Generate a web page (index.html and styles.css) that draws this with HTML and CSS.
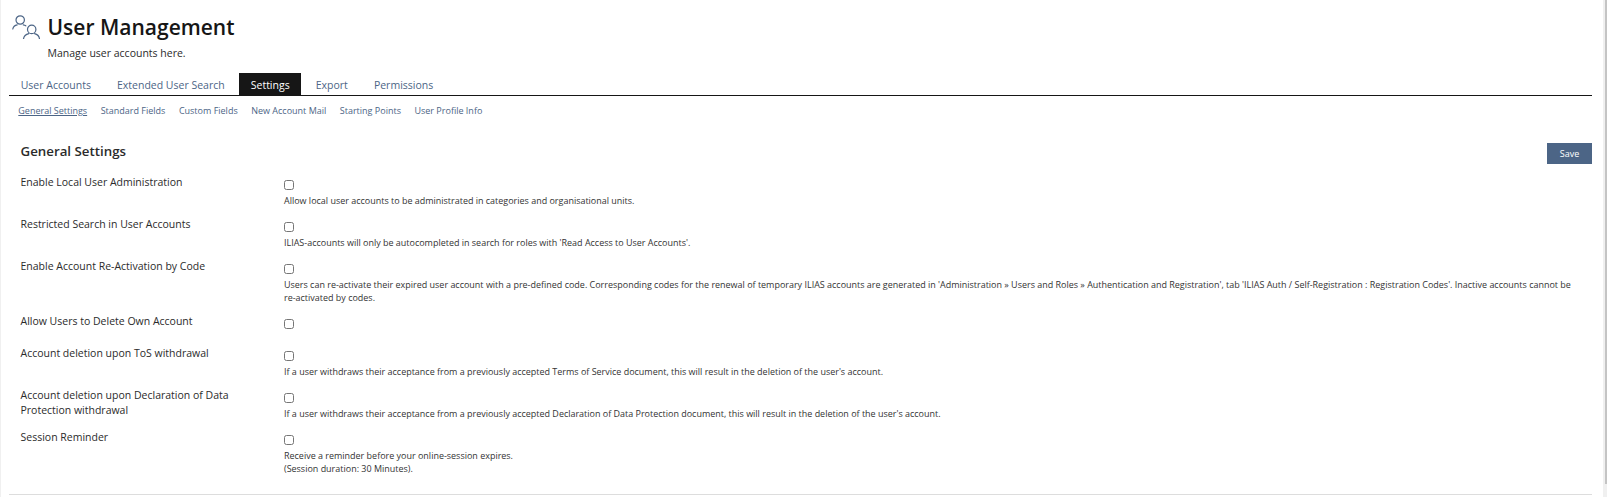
FILE: index.html
```html
<!DOCTYPE html>
<html>
    <head>
        <title>User Management</title>
        <link rel="stylesheet" href="styles.css">
    </head>
    <body>
        <div class="page">
            <div class="header">
                <svg class="header-icon" viewBox="0 0 28 24" fill="none" stroke="#4c6586" stroke-width="1.2" stroke-linecap="round">
                    <circle cx="8.200" cy="5" r="4.200"/>
                    <path d="M.8 14c.4-2.200 2-3.700 4.400-4.200"/>
                    <path d="M11.300 9.800c1 .2 1.800.5 2.500 1"/>
                    <circle cx="19.700" cy="14.400" r="4.200"/>
                    <path d="M11.500 23.800c.4-2.800 2.400-4.500 5.300-5.200"/>
                    <path d="M22.600 18.600c2.700.7 4.500 2.400 4.900 5.200"/>
                </svg>
                <div>
                    <h1>User Management</h1>
                    <p class="subtitle">Manage user accounts here.</p>
                </div>
            </div>

            <div class="tabs">
                <a href="#">User Accounts</a>
                <a href="#">Extended User Search</a>
                <a href="#" class="active">Settings</a>
                <a href="#">Export</a>
                <a href="#">Permissions</a>
            </div>

            <div class="subtabs">
                <a href="#" class="active">General Settings</a>
                <a href="#">Standard Fields</a>
                <a href="#">Custom Fields</a>
                <a href="#">New Account Mail</a>
                <a href="#">Starting Points</a>
                <a href="#">User Profile Info</a>
            </div>

            <form class="form">
                <div class="form-head">
                    <h2>General Settings</h2>
                    <button type="button">Save</button>
                </div>

                <div class="row">
                    <label>Enable Local User Administration</label>
                    <div class="field">
                        <input type="checkbox">
                        <div class="info">Allow local user accounts to be administrated in categories and organisational units.</div>
                    </div>
                </div>
                <div class="row">
                    <label>Restricted Search in User Accounts</label>
                    <div class="field">
                        <input type="checkbox">
                        <div class="info">ILIAS-accounts will only be autocompleted in search for roles with 'Read Access to User Accounts'.</div>
                    </div>
                </div>
                <div class="row">
                    <label>Enable Account Re-Activation by Code</label>
                    <div class="field">
                        <input type="checkbox">
                        <div class="info">Users can re-activate their expired user account with a pre-defined code. Corresponding codes for the renewal of temporary ILIAS accounts are generated in 'Administration » Users and Roles » Authentication and Registration', tab 'ILIAS Auth / Self-Registration : Registration Codes'. Inactive accounts cannot be re-activated by codes.</div>
                    </div>
                </div>
                <div class="row">
                    <label>Allow Users to Delete Own Account</label>
                    <div class="field">
                        <input type="checkbox">
                    </div>
                </div>
                <div class="row">
                    <label>Account deletion upon ToS withdrawal</label>
                    <div class="field">
                        <input type="checkbox">
                        <div class="info">If a user withdraws their acceptance from a previously accepted Terms of Service document, this will result in the deletion of the user's account.</div>
                    </div>
                </div>
                <div class="row">
                    <label>Account deletion upon Declaration of Data Protection withdrawal</label>
                    <div class="field">
                        <input type="checkbox">
                        <div class="info">If a user withdraws their acceptance from a previously accepted Declaration of Data Protection document, this will result in the deletion of the user's account.</div>
                    </div>
                </div>
                <div class="row">
                    <label>Session Reminder</label>
                    <div class="field">
                        <input type="checkbox">
                        <div class="info">Receive a reminder before your online-session expires.<br>(Session duration: 30 Minutes).</div>
                    </div>
                </div>
            </form>
        </div>
        <div class="scrollbar">
            <div class="thumb"></div>
        </div>
    </body>
</html>
```

FILE: styles.css
```css
body {
    font-family: "Open Sans", sans-serif;
    font-size: 10.5px;
    margin: 0;
    padding: 0;
    height: 497px;
    display: flex;
    color: #2b2b2b;
    background: #fff;
    overflow: hidden;
}

a {
    text-decoration: none;
}

.page {
    flex: 1;
    min-width: 0;
    padding: 0 11px 0 8px;
    border-left: 1px solid #f0f0f0;
}

.scrollbar {
    width: 4px;
    background: #f0f0f0;
    display: flex;
    justify-content: flex-end;
}

.thumb {
    width: 2px;
    height: 484px;
    background: #c4c4c4;
}

.header {
    display: flex;
    height: 73px;
    box-sizing: border-box;
    padding: 13px 0 0 3px;
}

.header-icon {
    width: 28px;
    height: 24px;
    margin: 2px 7.500px 0 0;
}

h1 {
    font-size: 21px;
    font-weight: 600;
    line-height: 28px;
    margin: 0;
    color: #161616;
}

.subtitle {
    margin: 4.500px 0 0;
    line-height: 15px;
}

.tabs {
    display: flex;
    gap: 2.700px;
    border-bottom: 1px solid #161616;
}

.tabs a {
    padding: 2px 11.700px 0;
    line-height: 20px;
    color: #4c6586;
}

.tabs a.active {
    background: #161616;
    color: #fff;
}

.subtabs {
    display: flex;
    gap: 13.500px;
    padding: 7px 9.300px 0;
    font-size: 9px;
    line-height: 15px;
}

.subtabs a {
    color: #4c6586;
}

.subtabs a.active {
    text-decoration: underline;
}

.form {
    padding: 0 0 9px 11.500px;
    border-bottom: 1px solid #dddddd;
}

.form-head {
    display: flex;
    justify-content: space-between;
    align-items: flex-start;
    margin: 25px 0 11px;
}

h2 {
    font-size: 13.300px;
    font-weight: 600;
    line-height: 17px;
    margin: 0;
}

button {
    font-family: inherit;
    font-size: 9px;
    width: 45px;
    height: 21px;
    padding: 0;
    border: none;
    background: #4c6586;
    color: #fff;
}

.row {
    display: grid;
    grid-template-columns: 263.500px 1fr;
    padding-bottom: 10px;
}

.row label {
    line-height: 15px;
    width: 240px;
}

.field {
    min-height: 22px;
}

.field input {
    appearance: none;
    display: block;
    box-sizing: border-box;
    width: 10px;
    height: 10px;
    margin: 5px 0 4px;
    border: 1px solid #767676;
    border-radius: 2.500px;
    background: #fff;
}

.info {
    font-size: 8.970px;
    line-height: 13px;
    padding-right: 15px;
    color: #333;
}
```
